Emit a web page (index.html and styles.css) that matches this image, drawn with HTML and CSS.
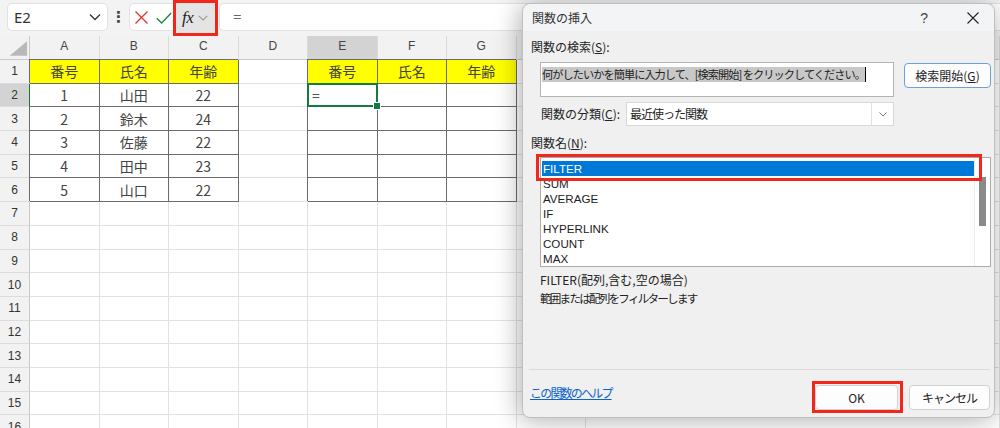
FILE: index.html
```html
<!DOCTYPE html>
<html lang="ja">
<head>
<meta charset="utf-8">
<title>関数の挿入</title>
<link rel="stylesheet" href="styles.css">
</head>
<body>
<div class="app">
  <div class="fbar">
    <div class="namebox"><span>E2</span><svg width="12" height="8" viewBox="0 0 12 8"><path d="M1 1.5l5 5 5-5" fill="none" stroke="#333" stroke-width="1.3"/></svg></div>
    <div class="dots">⋮</div>
    <div class="fxgroup">
      <div class="xbtn"><svg width="13" height="13" viewBox="0 0 13 13"><path d="M0.5 0.5l12 12M12.5 0.5l-12 12" stroke="#e0352b" stroke-width="1.3" fill="none"/></svg></div>
      <div class="cbtn"><svg width="16" height="12" viewBox="0 0 16 12"><path d="M0.8 6.2l4.8 4.8L15.2 1" stroke="#1f8a3a" stroke-width="1.4" fill="none"/></svg></div>
      <div class="fxbtn"><span class="fx">fx</span><svg width="10" height="6" viewBox="0 0 10 6"><path d="M0.8 0.8l4.2 4.2 4.2-4.2" fill="none" stroke="#9a9a9a" stroke-width="1.2"/></svg></div>
    </div>
    <div class="formula">=</div>
  </div>

  <div class="sheet">
    <div class="ch corner"><svg width="30" height="24" viewBox="0 0 30 24"><polygon points="28,5 28,20 10,20" fill="#b8b8b8"/></svg></div><div class="ch">A</div><div class="ch">B</div><div class="ch">C</div><div class="ch">D</div><div class="ch hl">E</div><div class="ch">F</div><div class="ch">G</div><div class="ch">H</div><div class="ch"></div>

    <div class="rh">1</div><div class="y t">番号</div><div class="y t">氏名</div><div class="y t">年齢</div><div></div><div class="y t">番号</div><div class="y t">氏名</div><div class="y t">年齢</div><div></div><div></div>
    <div class="rh hl">2</div><div class="t gl">1</div><div class="t">山田</div><div class="t">22</div><div></div><div class="t sel">=</div><div class="t"></div><div class="t"></div><div></div><div></div>
    <div class="rh">3</div><div class="t">2</div><div class="t">鈴木</div><div class="t">24</div><div></div><div class="t"></div><div class="t"></div><div class="t"></div><div></div><div></div>
    <div class="rh">4</div><div class="t">3</div><div class="t">佐藤</div><div class="t">22</div><div></div><div class="t"></div><div class="t"></div><div class="t"></div><div></div><div></div>
    <div class="rh">5</div><div class="t">4</div><div class="t">田中</div><div class="t">23</div><div></div><div class="t"></div><div class="t"></div><div class="t"></div><div></div><div></div>
    <div class="rh">6</div><div class="t">5</div><div class="t">山口</div><div class="t">22</div><div></div><div class="t"></div><div class="t"></div><div class="t"></div><div></div><div></div>
    <div class="rh">7</div><div></div><div></div><div></div><div></div><div></div><div></div><div></div><div></div><div></div>
    <div class="rh">8</div><div></div><div></div><div></div><div></div><div></div><div></div><div></div><div></div><div></div>
    <div class="rh">9</div><div></div><div></div><div></div><div></div><div></div><div></div><div></div><div></div><div></div>
    <div class="rh">10</div><div></div><div></div><div></div><div></div><div></div><div></div><div></div><div></div><div></div>
    <div class="rh">11</div><div></div><div></div><div></div><div></div><div></div><div></div><div></div><div></div><div></div>
    <div class="rh">12</div><div></div><div></div><div></div><div></div><div></div><div></div><div></div><div></div><div></div>
    <div class="rh">13</div><div></div><div></div><div></div><div></div><div></div><div></div><div></div><div></div><div></div>
    <div class="rh">14</div><div></div><div></div><div></div><div></div><div></div><div></div><div></div><div></div><div></div>
    <div class="rh">15</div><div></div><div></div><div></div><div></div><div></div><div></div><div></div><div></div><div></div>
    <div class="rh">16</div><div></div><div></div><div></div><div></div><div></div><div></div><div></div><div></div><div></div>
  </div>

  <div class="dialog">
    <div class="dtitle">
      <span class="ttext">関数の挿入</span>
      <span class="q">?</span>
      <svg class="close" width="12" height="12" viewBox="0 0 12 12"><path d="M0.5 0.5l11 11M11.5 0.5l-11 11" stroke="#222" stroke-width="1.1" fill="none"/></svg>
    </div>
    <div class="dbody">
      <div class="lbl l1">関数の検索(<span class="mn">S</span>):</div>
      <div class="searchrow">
        <div class="search"><span class="seltext">何がしたいかを簡単に入力して、[検索開始] をクリックしてください。</span></div>
        <div class="btn go">検索開始(<span class="mn">G</span>)</div>
      </div>
      <div class="catrow">
        <span class="lbl catlbl">関数の分類(<span class="mn">C</span>):</span>
        <div class="select"><span class="seltxt">最近使った関数</span><span class="arrow"><svg width="8" height="5" viewBox="0 0 8 5"><path d="M0.5 0.5l3.5 3.5 3.5-3.5" fill="none" stroke="#777" stroke-width="1"/></svg></span></div>
      </div>
      <div class="lbl l2">関数名(<span class="mn">N</span>):</div>
      <div class="list">
        <ul class="items">
          <li class="on">FILTER</li>
          <li>SUM</li>
          <li>AVERAGE</li>
          <li>IF</li>
          <li>HYPERLINK</li>
          <li>COUNT</li>
          <li>MAX</li>
        </ul>
        <div class="sbar"><div class="thumb"></div></div>
      </div>
      <div class="desc">
        <div>FILTER(配列,含む,空の場合)</div>
        <div class="d2">範囲または配列をフィルターします</div>
      </div>
    </div>
    <div class="dfoot">
      <a class="help">この関数のヘルプ</a>
      <div class="btn ok">OK</div>
      <div class="btn cancel">キャンセル</div>
    </div>
  </div>
</div>
</body>
</html>
```
FILE: styles.css
```css
* { box-sizing: border-box; }
html, body { margin: 0; padding: 0; }
body {
  width: 1000px;
  height: 428px;
  overflow: hidden;
  background: #fff;
  font-family: "Noto Sans CJK JP", sans-serif;
}
.app {
  position: relative;
  height: 428px;
  display: flex;
  flex-direction: column;
}

/* formula bar */
.fbar {
  height: 36px;
  flex: none;
  background: #f3f3f3;
  display: flex;
  align-items: flex-start;
  padding: 3px 0 0 7px;
}
.namebox {
  width: 101px;
  height: 28px;
  background: #fff;
  border: 1px solid #e2e2e2;
  border-radius: 5px;
  display: flex;
  align-items: center;
  justify-content: space-between;
  padding: 0 6px 0 6px;
  font: 15px "Noto Sans", sans-serif;
  color: #333;
}
.dots {
  width: 21px;
  height: 28px;
  display: flex;
  align-items: center;
  justify-content: center;
  font: bold 15px "DejaVu Sans", sans-serif;
  color: #444;
}
.fxgroup {
  width: 88px;
  height: 28px;
  background: #fff;
  border: 1px solid #e2e2e2;
  border-radius: 5px;
  display: flex;
  align-items: stretch;
}
.xbtn { width: 22px; display: flex; align-items: center; justify-content: center; }
.cbtn { width: 24px; display: flex; align-items: center; justify-content: center; padding-top: 1px; }
.fxbtn {
  position: relative;
  width: 39px;
  margin: -1px 0 -3px 0;
  background: #e4e4e4;
  border-radius: 3px;
  display: flex;
  align-items: center;
  padding-left: 6px;
  gap: 5px;
}
.fxbtn::after {
  content: "";
  position: absolute;
  left: -3px; top: -3px; right: -3px; bottom: -3px;
  border: 3px solid #f3261c;
}
.fx {
  font: italic 17px "Liberation Serif", serif;
  color: #222;
  letter-spacing: -0.5px;
}
.formula {
  flex: 1;
  height: 28px;
  margin-left: 2px;
  background: #fff;
  border: 1px solid #e2e2e2;
  border-right: none;
  border-radius: 5px 0 0 5px;
  padding-left: 13px;
  font: 15px "Noto Sans", sans-serif;
  color: #666;
  line-height: 25px;
}

/* sheet grid */
.sheet {
  flex: 1;
  display: grid;
  grid-template-columns: 30px repeat(8, 69.5px) 1fr;
  grid-template-rows: 24px;
  grid-auto-rows: 23.7px;
  overflow: hidden;
}
.sheet > div {
  border-right: 1px solid #e2e2e2;
  border-bottom: 1px solid #e2e2e2;
  display: flex;
  align-items: center;
  justify-content: center;
  font-size: 14px;
  line-height: 18px;
  color: #444;
  white-space: nowrap;
  min-width: 0;
}
.sheet > .ch {
  background: #f2f2f2;
  border-right-color: #dadada;
  border-bottom-color: #c9c9c9;
  align-items: flex-start;
  padding-top: 2px;
  font: 12px/16px "Liberation Sans", sans-serif;
  color: #444;
}
.sheet > .corner { padding: 0; border-right-color: #c9c9c9; }
.sheet > .rh {
  background: #f2f2f2;
  border-right-color: #c9c9c9;
  border-bottom-color: #dcdcdc;
  font: 12px/16px "Liberation Sans", sans-serif;
  color: #333;
}
.sheet > .hl { background: #d3d3d3; }
.sheet > .ch.hl { border-bottom: 1px solid #1e7145; }
.sheet > .rh.hl { border-right: 1px solid #1e7145; }
.sheet > .y { background: #ffff00; }
.sheet > .t {
  border-right-color: #6b6b6b;
  border-bottom-color: #6b6b6b;
  box-shadow: -1px -1px 0 #6b6b6b;
}
.sheet > .t.gl { box-shadow: 0 -1px 0 #6b6b6b, -1px 0 0 #1e7145; }
.sheet > .sel {
  position: relative;
  justify-content: flex-start;
  padding-left: 4px;
  color: #555;
}
.sheet > .sel::after {
  content: "";
  position: absolute;
  left: -1px; top: -1px; right: -1px; bottom: -1px;
  border: 2px solid #107c41;
}
.sheet > .sel::before {
  content: "";
  position: absolute;
  right: -4px;
  bottom: -4px;
  width: 6px;
  height: 6px;
  background: #107c41;
  border: 1px solid #fff;
  z-index: 1;
}

/* dialog */
.dialog {
  position: absolute;
  left: 522px;
  top: 3px;
  width: 473px;
  height: 415px;
  background: #f0f0f0;
  border: 1px solid #bfbfbf;
  border-radius: 8px;
  box-shadow: -2px 2px 26px rgba(0, 0, 0, 0.32);
  display: flex;
  flex-direction: column;
  font-family: "Noto Sans CJK JP", sans-serif;
  font-size: 12px;
  color: #222;
  overflow: hidden;
}
.mn {
  text-decoration: underline;
  text-underline-offset: 1px;
}
.dtitle {
  height: 27px;
  flex: none;
  display: flex;
  align-items: center;
  padding-left: 9px;
  background: #f3f4f6;
  border-radius: 8px 8px 0 0;
  line-height: 16px;
  color: #333;
}
.ttext { flex: 1; }
.q {
  font: 14px "Liberation Sans", sans-serif;
  color: #444;
  margin-right: 39px;
}
.close { margin-right: 15px; }
.dbody {
  flex: 1;
  padding-left: 8px;
  display: flex;
  flex-direction: column;
}
.lbl { line-height: 16px; }
.l1 { margin-top: 8px; }
.searchrow {
  display: flex;
  align-items: flex-start;
  margin-top: 7px;
  padding-left: 9px;
}
.search {
  width: 354px;
  height: 35px;
  background: #fff;
  border: 1px solid #b4b4b4;
  padding: 2px 1px 0 1px;
  overflow: hidden;
}
.seltext {
  display: inline-block;
  height: 15px;
  font-size: 11.2px;
  line-height: 15px;
  background: #c8c8c8;
  border-right: 1px solid #000;
  color: #222;
  white-space: nowrap;
  letter-spacing: -0.95px;
}
.btn {
  height: 25px;
  background: #fdfdfd;
  border: 1px solid #d1d1d1;
  border-radius: 4px;
  display: flex;
  align-items: center;
  justify-content: center;
  color: #222;
  line-height: 16px;
}
.go {
  width: 87px;
  margin-left: 10px;
  margin-top: 1px;
  border-color: #6f9fd6;
}
.catrow {
  display: flex;
  align-items: center;
  margin-top: 5px;
  padding-left: 10px;
}
.catlbl { width: 85px; }
.select {
  width: 268px;
  height: 24px;
  background: #fff;
  border: 1px solid #d9d9d9;
  display: flex;
  align-items: stretch;
}
.seltxt { flex: 1; padding-left: 3px; line-height: 22px; letter-spacing: -1px; }
.arrow {
  width: 22px;
  border-left: 1px solid #e2e2e2;
  display: flex;
  align-items: center;
  justify-content: center;
}
.l2 { margin-top: 9px; }
.list {
  margin-top: 6px;
  margin-left: 9px;
  width: 451px;
  height: 110px;
  background: #fff;
  border: 1px solid #acacac;
  display: flex;
}
.items {
  flex: 1;
  list-style: none;
  margin: 0;
  padding: 3px 0 0 1px;
  font: 11.6px/15px "Liberation Sans", "Noto Sans CJK JP", sans-serif;
  color: #222;
}
.items li { padding-left: 1px; height: 15px; }
.items li.on {
  position: relative;
  background: #0078d7;
  color: #fff;
}
.items li.on::after {
  content: "";
  position: absolute;
  left: -6px; top: -7px; right: -8px; bottom: -5px;
  border: 3px solid #f3261c;
}
.sbar {
  width: 16px;
  flex: none;
  border-left: 1px solid #ececec;
  padding: 19px 0 0 4px;
}
.thumb {
  width: 7px;
  height: 49px;
  background: #8a8a8a;
}
.desc {
  margin-top: 3px;
  margin-left: 9px;
  line-height: 19px;
  color: #222;
}
.d2 { font-size: 11.6px; letter-spacing: -1.8px; }
.dfoot {
  flex: none;
  margin: 0 4px 0 6px;
  border-top: 1px solid #dadada;
  padding: 15px 0 7px 1px;
  display: flex;
  align-items: flex-start;
}
.help {
  flex: 1;
  color: #0a63c9;
  text-decoration: underline;
  line-height: 16px;
  letter-spacing: -1.8px;
}
.ok {
  position: relative;
  width: 83px;
}
.ok::after {
  content: "";
  position: absolute;
  left: -4px; top: -5px; right: -6px; bottom: -4px;
  border: 3px solid #f3261c;
}
.cancel {
  width: 81px;
  margin-left: 11px;
  letter-spacing: -1px;
}
```
